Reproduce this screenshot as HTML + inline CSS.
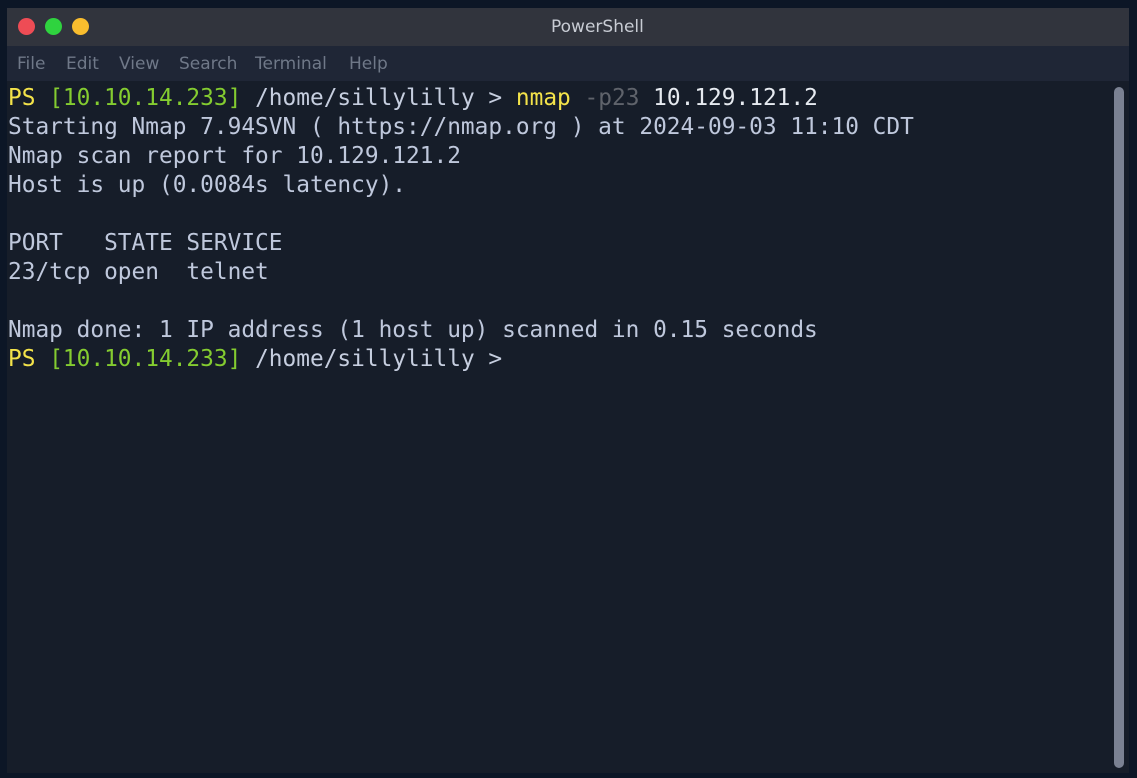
<!DOCTYPE html>
<html><head><style>
html,body{margin:0;padding:0;width:1137px;height:778px;overflow:hidden;background:#0c1626;}
.win{position:absolute;left:7px;top:8px;width:1122px;height:765px;background:#161d29;}
.title{position:absolute;left:0;top:0;width:100%;height:38px;background:#31343d;}
.title .t{position:absolute;left:544px;top:9px;color:#c8ccd4;font:17px "DejaVu Sans","Liberation Sans",sans-serif;}
.dot{position:absolute;top:10px;width:17px;height:17px;border-radius:50%;}
.menu{position:absolute;left:0;top:38px;width:100%;height:35px;background:#1f2636;}
.menu span{position:absolute;top:8px;color:#6f7888;font:17px "DejaVu Sans","Liberation Sans",sans-serif;}
.term{position:absolute;left:1px;top:76px;font:22.8px/29px "DejaVu Sans Mono","Liberation Mono",monospace;color:#bfc8dc;white-space:pre;}
.y{color:#f3e34a}.g{color:#84cc30}.p{color:#c6cedf}.gr{color:#5f636b}.w{color:#e6eaf0}
.sb{position:absolute;left:1107px;top:79px;width:10px;height:681px;border-radius:5px;background:#7a8192;}
</style></head><body>
<div class="win">
<div class="title"><div class="dot" style="left:11px;background:#ee4c55"></div><div class="dot" style="left:38px;background:#2fd33f"></div><div class="dot" style="left:65px;background:#f9bd2e"></div><div class="t">PowerShell</div></div>
<div class="menu"><span style="left:10px">File</span><span style="left:59px">Edit</span><span style="left:112px">View</span><span style="left:172px">Search</span><span style="left:248px">Terminal</span><span style="left:342px">Help</span></div>
<div class="term"><span class="y">PS</span> <span class="g">[10.10.14.233]</span> <span class="p">/home/sillylilly &gt;</span> <span class="y">nmap</span> <span class="gr">-p23</span> <span class="w">10.129.121.2</span>
Starting Nmap 7.94SVN ( https://nmap.org ) at 2024-09-03 11:10 CDT
Nmap scan report for 10.129.121.2
Host is up (0.0084s latency).

PORT   STATE SERVICE
23/tcp open  telnet

Nmap done: 1 IP address (1 host up) scanned in 0.15 seconds
<span class="y">PS</span> <span class="g">[10.10.14.233]</span> <span class="p">/home/sillylilly &gt;</span></div>
<div class="sb"></div>
</div>
</body></html>
